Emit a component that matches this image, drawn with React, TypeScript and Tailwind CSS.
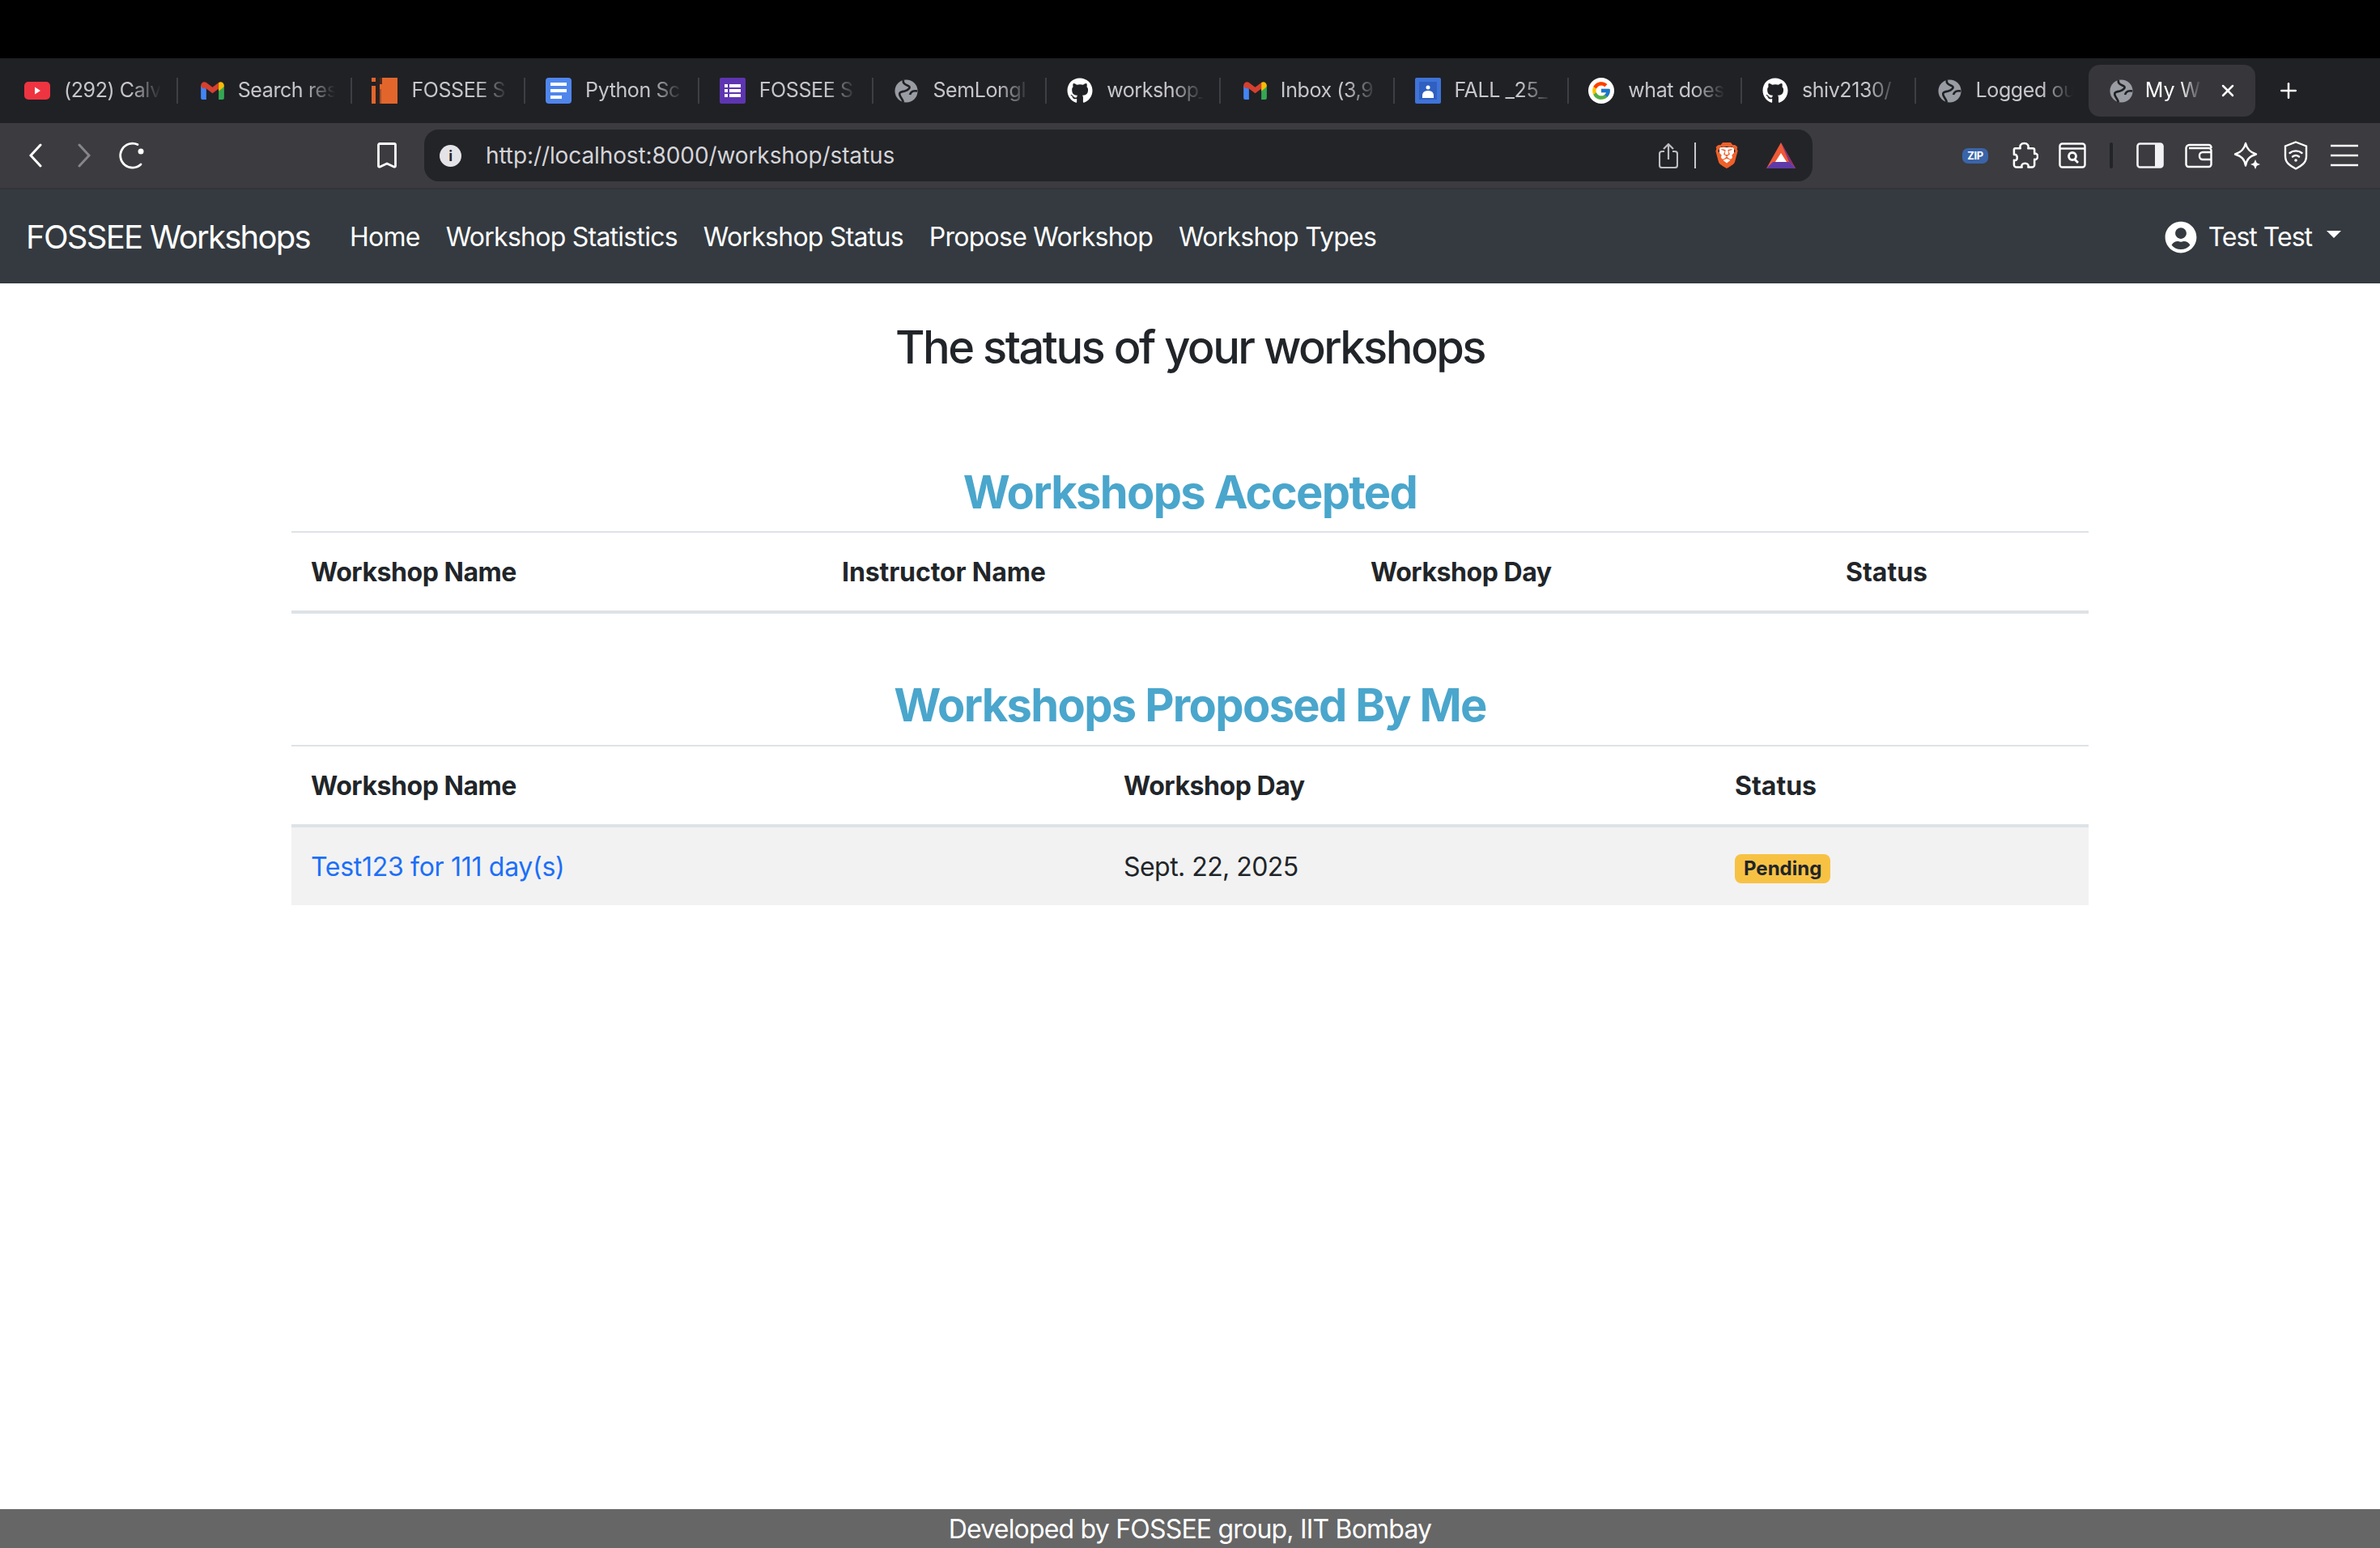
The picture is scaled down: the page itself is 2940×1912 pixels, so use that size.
import { Plus, X } from "lucide-react";
import { FaGithub, FaUserCircle } from "react-icons/fa";
import { FcGoogle } from "react-icons/fc";
import { SiBrave } from "react-icons/si";

const Globe = () => (
  <svg viewBox="0 0 32 32" className="ml-[2px] h-[29px] w-[29px]">
    <circle cx="16" cy="16" r="15.500" fill="#9a9ca3" />
    <path
      d="M12 1c-1 5 3 6 7 8s-1 6-5 7-8 1-7 5 3 4 5 10M31 16c-5-1-9 1-10 5"
      fill="none"
      stroke="#202125"
      strokeWidth="3"
    />
  </svg>
);

const Gmail = () => (
  <svg viewBox="0 0 30 23" className="ml-[3px] h-[22px] w-[29px]">
    <path d="M0 5v16a2 2 0 0 0 2 2h5V9z" fill="#4285f4" />
    <path d="M23 9v14h5a2 2 0 0 0 2-2V5z" fill="#34a853" />
    <path d="M0 5c0-4 4-6 7-4l8 6 8-6v8l-8 6-8-6L2 8C1 7 0 6 0 5z" fill="#d5402f" />
    <path d="M23 1c3-2 7 0 7 4 0 1-1 2-2 3l-5 4z" fill="#fbbc04" />
  </svg>
);

const YouTube = () => (
  <svg viewBox="0 0 32 22" className="h-[22px] w-[32px]">
    <rect width="32" height="22" rx="5" fill="#ee3440" />
    <path d="M13 6.500v9l7-4.500z" fill="#fff" />
  </svg>
);

const Fossee = () => (
  <svg viewBox="0 0 32 32" className="h-[32px] w-[32px]">
    <rect width="32" height="32" fill="#e2662c" />
    <rect x="5" width="5" height="32" fill="#2b2321" />
    <rect y="5" width="5" height="5" fill="#202125" />
    <rect x="10" width="3" height="8" fill="#4a2a1e" />
    <rect x="10" y="14" width="2" height="18" fill="#a84f26" />
  </svg>
);

const Docs = () => (
  <svg viewBox="0 0 32 32" className="h-[32px] w-[32px]">
    <rect width="32" height="32" rx="4" fill="#4f86ec" />
    <rect x="6" y="6" width="20" height="4" fill="#fff" />
    <rect x="6" y="14" width="20" height="4" fill="#fff" />
    <rect x="6" y="22" width="14" height="4" fill="#fff" />
  </svg>
);

const Forms = () => (
  <svg viewBox="0 0 32 32" className="h-[32px] w-[32px]">
    <rect width="32" height="32" rx="2" fill="#5e35b1" />
    <g fill="#fff">
      <rect x="6" y="8" width="4" height="4" />
      <rect x="12" y="8" width="14" height="4" />
      <rect x="6" y="14" width="4" height="4" />
      <rect x="12" y="14" width="14" height="4" />
      <rect x="6" y="20" width="4" height="4" />
      <rect x="12" y="20" width="14" height="4" />
    </g>
  </svg>
);

const Classroom = () => (
  <svg viewBox="0 0 32 32" className="h-[32px] w-[32px]">
    <rect width="32" height="32" rx="2" fill="#3f73d8" />
    <rect x="5" y="5" width="22" height="22" fill="#2f5fc0" />
    <circle cx="16" cy="12" r="2.500" fill="#fff" />
    <path d="M9 25v-3c0-4 3-6 7-6s7 2 7 6v3z" fill="#fff" />
  </svg>
);

const GithubIcon = () => (
  <span className="flex h-[32px] w-[32px] items-center justify-center rounded-full text-white">
    <FaGithub size={32} />
  </span>
);

const GoogleIcon = () => (
  <span className="flex h-[32px] w-[32px] items-center justify-center rounded-full bg-white">
    <FcGoogle size={26} />
  </span>
);

const tabs = [
  { title: "(292) Calv", icon: <YouTube /> },
  { title: "Search res", icon: <Gmail /> },
  { title: "FOSSEE S", icon: <Fossee /> },
  { title: "Python Sc", icon: <Docs /> },
  { title: "FOSSEE S", icon: <Forms /> },
  { title: "SemLongl", icon: <Globe /> },
  { title: "workshop_", icon: <GithubIcon /> },
  { title: "Inbox (3,9", icon: <Gmail /> },
  { title: "FALL _25_", icon: <Classroom /> },
  { title: "what does", icon: <GoogleIcon /> },
  { title: "shiv2130/", icon: <GithubIcon /> },
  { title: "Logged ou", icon: <Globe /> },
];

const navLinks = [
  "Home",
  "Workshop Statistics",
  "Workshop Status",
  "Propose Workshop",
  "Workshop Types",
];

function BrowserTabs() {
  return (
    <div className="flex h-[80px] items-center bg-[#202125] pl-[30px]">
      {tabs.map((tab, i) => (
        <div
          key={i}
          className="mr-[24.700px] flex h-[32px] w-[190px] shrink-0 items-center border-r-2 border-[#3e3f44] last:border-r-0"
        >
          <span className="flex w-[49px] shrink-0 justify-start">{tab.icon}</span>
          <span className="w-[120px] whitespace-nowrap text-[25px] tracking-[-0.4px] text-[#c6c6ca] [mask-image:linear-gradient(to_right,black_68%,transparent_100%)]">
            {tab.title}
          </span>
        </div>
      ))}
      <div className="ml-[-26.400px] flex h-[64px] w-[206px] shrink-0 items-center rounded-[14px] bg-[#36363b] pl-[24px]">
        <span className="w-[46px] shrink-0">
          <Globe />
        </span>
        <span className="w-[70px] whitespace-nowrap text-[25px] tracking-[-0.1px] text-white [mask-image:linear-gradient(to_right,black_62%,transparent_100%)]">
          My W
        </span>
        <X size={24} strokeWidth={2.5} className="ml-[20px] text-white" />
      </div>
      <Plus size={30} strokeWidth={2} className="ml-[26px] text-white" />
    </div>
  );
}

function BrowserToolbar() {
  return (
    <div className="flex h-[82px] items-center border-b-2 border-[#333438] bg-[#3b3b40] pl-[36px]">
      <svg viewBox="0 0 16 30" className="h-[30px] w-[16px]" fill="none" stroke="#fff" strokeWidth="3" strokeLinecap="round">
        <path d="M14 2L2 15l12 13" />
      </svg>
      <svg viewBox="0 0 16 30" className="ml-[44px] h-[30px] w-[16px]" fill="none" stroke="#85868a" strokeWidth="3" strokeLinecap="round">
        <path d="M2 2l12 13L2 28" />
      </svg>
      <svg viewBox="0 0 36 36" className="ml-[34px] h-[36px] w-[36px]" fill="none" stroke="#fff" strokeWidth="2.800">
        <path d="M24 4.500A15 15 0 1 0 28 29" strokeLinecap="round" />
        <circle cx="28" cy="13" r="3.500" fill="#fff" stroke="none" />
      </svg>
      <svg viewBox="0 0 24 32" className="ml-[284px] h-[32px] w-[24px]" fill="none" stroke="#fff" strokeWidth="2.800" strokeLinejoin="round">
        <path d="M3 1.500h18a1.500 1.500 0 0 1 1.500 1.500v26c0 1-1 1.500-2 1L12 26l-8.500 4c-1 .5-2 0-2-1V3A1.500 1.500 0 0 1 3 1.500z" />
      </svg>
      <div className="ml-[34px] flex h-[64px] w-[1715px] items-center rounded-[18px] bg-[#232428] pl-[19px]">
        <span className="flex h-[27px] w-[27px] items-center justify-center rounded-full bg-[#e4e4e8] text-[18px] font-bold text-[#232428]">
          i
        </span>
        <span className="ml-[30px] text-[28px] tracking-[-0.1px] text-[#d5d5d9]">http://localhost:8000/workshop/status</span>
        <div className="ml-auto flex items-center pr-[21px]">
          <svg viewBox="0 0 24 32" className="h-[32px] w-[24px]" fill="none" stroke="#bdbdc1" strokeWidth="2.200" strokeLinejoin="round">
            <path d="M7 11H4a3 3 0 0 0-3 3v14a3 3 0 0 0 3 3h16a3 3 0 0 0 3-3V14a3 3 0 0 0-3-3h-3M12 21V2M6 8l6-6 6 6" />
          </svg>
          <div className="ml-[20px] h-[32px] w-[2px] bg-[#c8c8cc]" />
          <span className="relative ml-[22px] flex h-[36px] w-[32px] items-center justify-center">
            <span className="absolute inset-x-[7px] inset-y-[8px] bg-white" />
            <SiBrave size={36} className="relative text-[#f0602a]" />
          </span>
          <svg viewBox="0 0 36 32" className="ml-[33px] h-[32px] w-[36px]">
            <path d="M18 0l18 32H0z" fill="#ee5a36" />
            <path d="M18 0l18 32-8-8z" fill="#8b2f78" />
            <path d="M0 32h36l-8-8H8z" fill="#5f3aa8" />
            <path d="M18 13l7 11H11z" fill="#fff" />
          </svg>
        </div>
      </div>
      <div className="ml-[185px] flex items-center text-white">
        <span className="w-[32px] rounded-[7px] bg-[#3a64a8] text-center text-[13px] font-bold leading-[19px]">ZIP</span>
        <svg viewBox="0 0 34 34" className="ml-[29px] h-[34px] w-[33px]" fill="none" stroke="#fff" strokeWidth="2.600" strokeLinejoin="round">
          <path d="M4 8h7c-1-4 1-6.500 5-6.500S22 4 21 8h6a2 2 0 0 1 2 2v5c3-1 4 1 4 3.500S31 23 29 22v7a3 3 0 0 1-3 3h-5c1-3-1-5-4-5s-5 2-4 5H6a3 3 0 0 1-3-3v-6c3 1 4-1 4-3.500S5 15 3 16V9z" />
        </svg>
        <svg viewBox="0 0 34 32" className="ml-[25px] h-[32px] w-[34px]" fill="none" stroke="#fff" strokeWidth="2.400">
          <rect x="1.500" y="1.500" width="31" height="29" rx="3" />
          <path d="M1.500 7.500h31" />
          <circle cx="17" cy="17" r="4.500" strokeWidth="2.800" />
          <path d="M20 21l4 4" strokeWidth="2.800" />
        </svg>
        <div className="ml-[29px] h-[32px] w-[4px] rounded-full bg-[#232428]" />
        <svg viewBox="0 0 34 32" className="ml-[29px] h-[32px] w-[34px]">
          <rect x="1.500" y="1.500" width="31" height="29" rx="3" fill="none" stroke="#f2f2f4" strokeWidth="2.600" />
          <path d="M23 1.500h8a2 2 0 0 1 2 2v25a2 2 0 0 1-2 2h-8z" fill="#f2f2f4" />
        </svg>
        <svg viewBox="0 0 34 32" className="ml-[26px] h-[32px] w-[34px]" fill="none" stroke="#fff" strokeWidth="2.400">
          <path d="M32.500 7V6a3 3 0 0 0-3-3h-24a4 4 0 0 0-4 4v20a3 3 0 0 0 3 3h25a3 3 0 0 0 3-3V10a3 3 0 0 0-3-3H5" />
          <path d="M32.500 12H22a4 4 0 0 0-4 4v1a4 4 0 0 0 4 4h10.500" />
        </svg>
        <svg viewBox="0 0 34 34" className="ml-[26px] h-[34px] w-[34px]" fill="none" stroke="#fff" strokeWidth="2.400" strokeLinejoin="round">
          <path d="M15 2c1.500 7 5 11 13 13.500-8 2.500-11.500 6-13 14-1.500-8-5-11.500-13-14C10 13 13.500 9 15 2z" />
          <path d="M27 22l1.800 4.200L33 28l-4.200 1.800L27 34l-1.800-4.200L21 28l4.200-1.800z" fill="#fff" stroke="none" />
        </svg>
        <svg viewBox="0 0 30 36" className="ml-[28px] h-[36px] w-[30px]" fill="none" stroke="#fff" strokeWidth="2.400" strokeLinecap="round">
          <path d="M15 1.500l13 5V19c0 8-6 12-13 15.500C8 31 2 27 2 19V6.500z" />
          <path d="M7.500 15c4-3.500 11-3.500 15 0M11 19.500c2.500-2 5.500-2 8 0" />
          <circle cx="15" cy="24" r="1.800" fill="#fff" stroke="none" />
        </svg>
        <svg viewBox="0 0 34 28" className="ml-[28px] h-[28px] w-[34px]" stroke="#fff" strokeWidth="2.500">
          <path d="M0 2h34M0 14h34M0 26h34" />
        </svg>
      </div>
    </div>
  );
}

function NavBar() {
  return (
    <nav className="flex h-[116px] items-center justify-between bg-[#343a40] pl-[32px] pr-[48px] pt-[2px] text-white">
      <div className="flex items-center">
        <span className="text-[40px] leading-[48px] tracking-[-1.7px]">FOSSEE Workshops</span>
        <ul className="ml-[41px] flex gap-[16px]">
          {navLinks.map((link) => (
            <li key={link} className="px-[8px] text-[32px] leading-[48px] tracking-[-0.75px]">
              {link}
            </li>
          ))}
        </ul>
      </div>
      <div className="flex items-center text-[32px] leading-[48px] tracking-[-1px]">
        <FaUserCircle size={40} className="mr-[14px]" />
        Test Test
        <span className="mb-[8px] ml-[18px] h-0 w-0 border-x-[9px] border-t-[9px] border-x-transparent border-t-white" />
      </div>
    </nav>
  );
}

function WorkshopsAccepted() {
  return (
    <table className="w-full table-fixed border-t-2 border-[#dee2e6]">
      <thead>
        <tr className="border-b-4 border-[#dee2e6]">
          <th className="w-[656px] px-[24px] pb-[23px] pt-[25px] text-left font-bold leading-[48px]">Workshop Name</th>
          <th className="w-[653px] px-[24px] pb-[23px] pt-[25px] text-left font-bold leading-[48px] tracking-[-0.1px]">Instructor Name</th>
          <th className="w-[587px] px-[24px] pb-[23px] pt-[25px] text-left font-bold leading-[48px]">Workshop Day</th>
          <th className="px-[24px] pb-[23px] pt-[25px] text-left font-bold leading-[48px] tracking-normal">Status</th>
        </tr>
      </thead>
    </table>
  );
}

function WorkshopsProposed() {
  return (
    <table className="w-full table-fixed border-t-2 border-[#dee2e6]">
      <thead>
        <tr className="border-b-4 border-[#dee2e6]">
          <th className="w-[1004px] px-[24px] pb-[23px] pt-[25px] text-left font-bold leading-[48px]">Workshop Name</th>
          <th className="w-[755px] px-[24px] pb-[23px] pt-[25px] text-left font-bold leading-[48px]">Workshop Day</th>
          <th className="px-[24px] pb-[23px] pt-[25px] text-left font-bold leading-[48px] tracking-normal">Status</th>
        </tr>
      </thead>
      <tbody>
        <tr className="bg-[#f2f2f2]">
          <td className="px-[24px] pb-[23px] pt-[25px] leading-[48px] tracking-[-0.3px] text-[#1c6ff8]">Test123 for 111 day(s)</td>
          <td className="px-[24px] pb-[23px] pt-[25px] leading-[48px] tracking-[-0.55px]">Sept. 22, 2025</td>
          <td className="px-[24px] pb-[23px] pt-[25px] leading-[48px]">
            <span className="inline-block rounded-[8px] bg-[#f7c244] px-[11px] py-[6px] align-middle text-[24px] font-bold leading-[24px] tracking-normal">
              Pending
            </span>
          </td>
        </tr>
      </tbody>
    </table>
  );
}

export default function App() {
  return (
    <div className="flex h-[1912px] flex-col bg-white font-['Inter',sans-serif] text-[32px] tracking-[-0.45px] text-[#212529]">
      <div className="h-[72px] bg-black" />
      <BrowserTabs />
      <BrowserToolbar />
      <NavBar />
      <main className="flex-1 px-[360px]">
        <h3 className="mt-[46px] text-center text-[56px] font-medium leading-[67px] tracking-[-2.5px]">
          The status of your workshops
        </h3>
        <h3 className="mt-[112px] pb-[14px] text-center text-[56px] font-bold leading-[67px] tracking-[-1.65px] text-[#4aa6cc]">
          Workshops Accepted
        </h3>
        <WorkshopsAccepted />
        <h3 className="mt-[80px] pb-[15px] text-center text-[56px] font-bold leading-[67px] tracking-[-1.65px] text-[#4aa6cc]">
          Workshops Proposed By Me
        </h3>
        <WorkshopsProposed />
      </main>
      <footer className="h-[48px] bg-[#666666] pt-[1px] text-center text-[32px] leading-[48px] tracking-[-0.8px] text-white">
        Developed by FOSSEE group, IIT Bombay
      </footer>
    </div>
  );
}
